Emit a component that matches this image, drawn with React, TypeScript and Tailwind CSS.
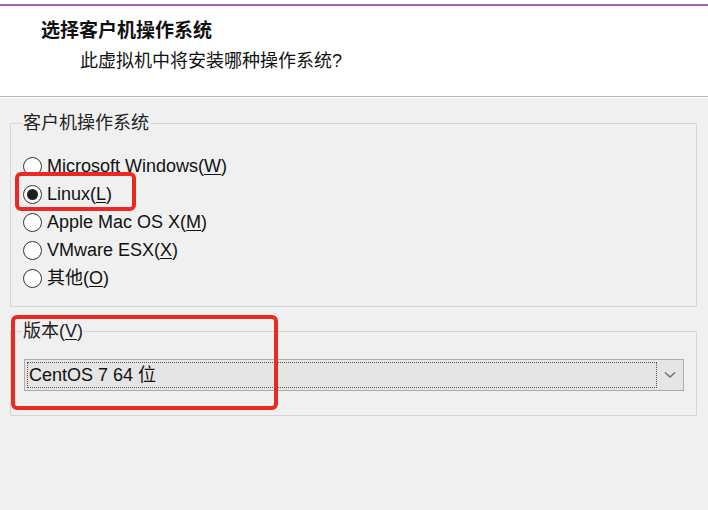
import React from 'react';

const font = { fontFamily: '"Liberation Sans", "Noto Sans CJK SC", sans-serif' };

interface RadioProps {
  label: string;
  hotkey: string;
  checked?: boolean;
}

const Radio = ({ label, hotkey, checked }: RadioProps) => (
  <div className="flex items-center h-[28px] gap-[5px]">
    <span className="w-[19px] h-[19px] rounded-full border border-[#333333] bg-white flex items-center justify-center shrink-0">
      {checked && <span className="w-[11px] h-[11px] rounded-full bg-[#1f1f1f]" />}
    </span>
    <span className="text-[18px] leading-none text-[#111111]">
      {label}(<span className="underline underline-offset-2">{hotkey}</span>)
    </span>
  </div>
);

export default function App() {
  return (
    <div className="w-[708px] h-[510px] bg-[#f0f0f0] overflow-hidden" style={font}>
      <header className="bg-white border-b border-[#b4b4b4]">
        <div className="h-[4px]" />
        <div className="h-[2px] bg-[#a463a8]" />
        <div className="pt-[13px] pb-[23px]">
          <div className="pl-[41px] text-[19px] leading-[24px] font-bold text-[#111111]">选择客户机操作系统</div>
          <div className="pl-[80px] mt-[6px] text-[18px] leading-[24px] text-[#111111]">此虚拟机中将安装哪种操作系统?</div>
        </div>
      </header>

      <div className="relative px-[10px] pr-[11px] border-t border-white">
        <fieldset className="mt-[14px] border border-[#d6d6d6] rounded-[1px]">
          <legend className="ml-[11px] px-[1px] text-[18px] leading-[22px] text-[#222222]">客户机操作系统</legend>
          <div className="pl-[12px] pt-[18px] pb-[14px]">
            <Radio label="Microsoft Windows" hotkey="W" />
            <Radio label="Linux" hotkey="L" checked />
            <Radio label="Apple Mac OS X" hotkey="M" />
            <Radio label="VMware ESX" hotkey="X" />
            <Radio label="其他" hotkey="O" />
          </div>
        </fieldset>

        <fieldset className="mt-[13px] border border-[#d6d6d6] rounded-[1px]">
          <legend className="ml-[11px] px-[1px] text-[18px] leading-[22px] text-[#222222]">
            版本(<span className="underline underline-offset-2">V</span>)
          </legend>
          <div className="pt-[17px] pb-[24px] pl-[13px] pr-[12px]">
            <div className="h-[32px] bg-[#e5e5e5] border border-[#adadad] flex items-center">
              <div className="ml-[2px] h-[26px] w-[630px] border border-dotted border-[#555555] flex items-center pl-[1px]">
                <span className="text-[18px] leading-none text-[#111111]">CentOS 7 64 位</span>
              </div>
              <div className="flex-1 flex items-center justify-center">
                <svg width="12" height="8" viewBox="0 0 12 8">
                  <path d="M1 1.5 L6 6 L11 1.5" fill="none" stroke="#707070" strokeWidth="1.6" />
                </svg>
              </div>
            </div>
          </div>
        </fieldset>

        <div className="absolute left-[15px] top-[74px] w-[121px] h-[39px] border-[4px] border-[#ea2a22] rounded-[6px]" />
        <div className="absolute left-[11px] top-[217px] w-[267px] h-[95px] border-[4px] border-[#ea2a22] rounded-[6px]" />
      </div>
    </div>
  );
}
